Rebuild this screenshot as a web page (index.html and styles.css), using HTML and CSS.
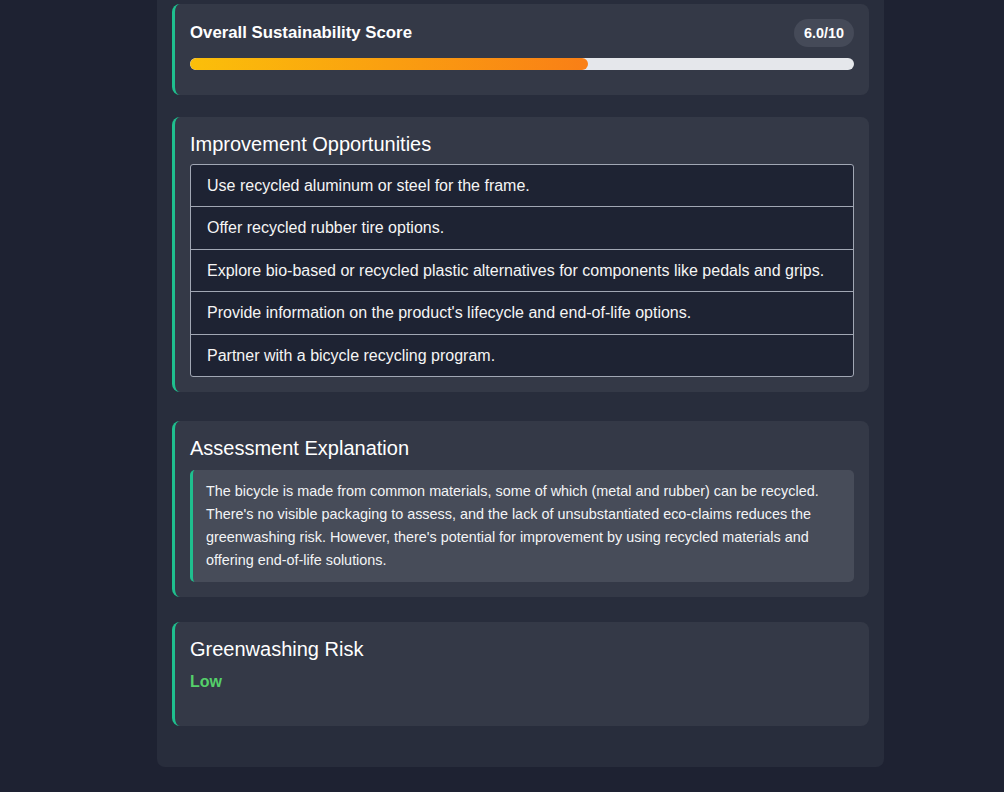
FILE: index.html
```html
<!DOCTYPE html>
<html>
<head>
<meta charset="utf-8">
<link rel="stylesheet" href="styles.css">
</head>
<body>
<div class="container">
  <section class="card score-card">
    <div class="score-head">
      <h3 class="score-title">Overall Sustainability Score</h3>
      <span class="badge">6.0/10</span>
    </div>
    <div class="bar"><div class="bar-fill" style="width:60%"></div></div>
  </section>

  <section class="card card-improve">
    <h2 class="card-title">Improvement Opportunities</h2>
    <ul class="list">
      <li>Use recycled aluminum or steel for the frame.</li>
      <li>Offer recycled rubber tire options.</li>
      <li>Explore bio-based or recycled plastic alternatives for components like pedals and grips.</li>
      <li>Provide information on the product's lifecycle and end-of-life options.</li>
      <li>Partner with a bicycle recycling program.</li>
    </ul>
  </section>

  <section class="card card-explain">
    <h2 class="card-title">Assessment Explanation</h2>
    <div class="explain">The bicycle is made from common materials, some of which (metal and rubber) can be recycled. There's no visible packaging to assess, and the lack of unsubstantiated eco-claims reduces the greenwashing risk. However, there's potential for improvement by using recycled materials and offering end-of-life solutions.</div>
  </section>

  <section class="card card-risk">
    <h2 class="card-title">Greenwashing Risk</h2>
    <p class="risk">Low</p>
  </section>
</div>
</body>
</html>
```
FILE: styles.css
```css
* { box-sizing: border-box; }
html, body { margin: 0; padding: 0; }
body {
  background: #1e2232;
  font-family: "Liberation Sans", Arial, sans-serif;
  color: #f3f4f6;
  height: 792px;
  overflow: hidden;
}
.container {
  width: 727px;
  margin-left: 157px;
  background: #282d3c;
  padding: 4px 15px 41px 15px;
  border-radius: 0 0 8px 8px;
}
.card {
  background: #343947;
  border-left: 3px solid #1fbf8e;
  border-radius: 8px;
  padding: 15px 15px 15px 15px;
}
.score-card { padding-bottom: 25px; }
.card-improve { margin-top: 22px; }
.card-explain { margin-top: 29px; }
.card-risk { margin-top: 25px; padding-bottom: 34px; }
.score-head {
  display: flex;
  align-items: center;
  justify-content: space-between;
  height: 28px;
}
.score-title {
  margin: 0;
  font-size: 16.8px;
  font-weight: bold;
  color: #ffffff;
}
.badge {
  background: #454a58;
  color: #ffffff;
  font-weight: bold;
  font-size: 14.4px;
  height: 28px;
  line-height: 28px;
  padding: 0 10px;
  border-radius: 14px;
}
.bar {
  margin-top: 11px;
  height: 12px;
  background: #e5e7eb;
  border-radius: 6px;
  overflow: hidden;
}
.bar-fill {
  height: 100%;
  background: linear-gradient(90deg, #fbbf0a, #f97f16);
  border-radius: 6px;
}
.card-title {
  margin: 0;
  font-size: 20px;
  font-weight: normal;
  line-height: 24px;
  color: #ffffff;
}
.list {
  list-style: none;
  margin: 8px 0 0 0;
  padding: 0;
  border: 1px solid #a1a7b4;
  border-radius: 3px;
  background: #1e2333;
}
.list li {
  font-size: 16px;
  line-height: 24px;
  padding: 9.1px 16px 8.3px 16px;
  color: #f5f5f5;
  border-bottom: 1px solid #a1a7b4;
}
.list li:last-child { border-bottom: none; }
.explain {
  margin-top: 10px;
  background: #474c59;
  border-left: 3px solid #1fbf8e;
  border-radius: 5px;
  padding: 10px 13px;
  font-size: 14.4px;
  line-height: 23px;
  color: #f3f4f6;
}
.risk {
  margin: 11px 0 0 0;
  font-size: 16px;
  font-weight: bold;
  line-height: 20px;
  color: #55d06a;
}
```
